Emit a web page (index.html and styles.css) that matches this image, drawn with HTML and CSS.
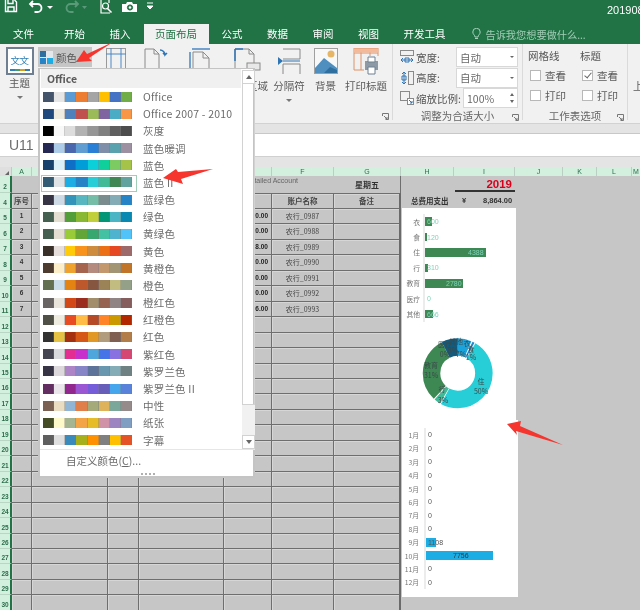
FILE: index.html
```html
<!DOCTYPE html>
<html lang="zh">
<head>
<meta charset="utf-8">
<title>Excel</title>
<link rel="stylesheet" href="styles.css">
</head>
<body>
<div class="app">
  <div class="titlebar">
    <svg class="qat" width="160" height="24" viewBox="0 0 160 24" fill="none" stroke="#fff">
      <path d="M5.5 0v11.5h11V2l-2-2M8 0v3.5h5V0M8 11v-4h6v4" stroke-width="1.4"/>
      <path d="M33 1l-3 3 3 3M30.5 4h7a4 4 0 0 1 0 8h-3" stroke-width="1.8"/>
      <path d="M47 6h6l-3 3z" fill="#fff" stroke="none"/>
      <path d="M75 1l3 3-3 3M77.5 4h-7a4 4 0 0 0 0 8h3" stroke="#5a9a78" stroke-width="1.8"/>
      <path d="M82 6h5l-2.500 3z" fill="#5a9a78" stroke="none"/>
      <path d="M101 0v13h9M109 0v3" stroke-width="1.2"/>
      <circle cx="105.500" cy="6" r="3" stroke-width="1.200"/>
      <path d="M107.500 8.500l4 4" stroke-width="1.600"/>
      <path d="M122 4h4l1-2h5l1 2h4v8h-15z" fill="#fff" stroke="none"/>
      <circle cx="130" cy="7.500" r="2.600" fill="#217346" stroke="#217346"/>
      <circle cx="130" cy="7.500" r="1.300" fill="#fff" stroke="none"/>
      <path d="M147 3h6M147 6h6l-3 3z" fill="#fff" stroke-width="1"/>
    </svg>
    <span class="filename">201908</span>
  </div>
  <div class="tabs">
    <span class="tab first">文件</span>
    <span class="tab second">开始</span>
    <span class="tab">插入</span>
    <span class="tab active">页面布局</span>
    <span class="tab after">公式</span>
    <span class="tab">数据</span>
    <span class="tab">审阅</span>
    <span class="tab">视图</span>
    <span class="tab">开发工具</span>
    <svg class="bulb" width="9" height="12" viewBox="0 0 9 12" fill="none" stroke="#a9d0ba"><path d="M3 9C3 7 .8 6.500.8 4a3.700 3.700 0 0 1 7.400 0C8.200 6.500 6 7 6 9zM3 10.500h3"/></svg>
    <span class="tell">告诉我您想要做什么...</span>
  </div>
  <div class="ribbon">
    <div class="group g-theme">
      <div class="theme-col">
        <div class="theme-icon"><span class="wen">文文</span><i class="dots"></i></div>
        <span class="blabel">主题</span>
        <i class="caret"></i>
      </div>
      <div class="color-btn"><i class="color-ico"></i><span>颜色</span></div>
    </div>
    <div class="group g-page">
      <div class="big w40">
        <svg width="22" height="28" viewBox="0 0 22 28" fill="none" stroke="#9a9a9a"><rect x="1.500" y="1.500" width="19" height="25"/><path d="M1 7h20M6 1v26M16 1v26" stroke="#4a86c5"/></svg>
        <span class="blabel">页边距</span>
      </div>
      <div class="big w40">
        <svg width="26" height="28" viewBox="0 0 26 28" fill="none" stroke="#8a8a8a"><path d="M2 2h9l5 5v20H2z"/><path d="M11 2v5h5"/><path d="M17 3a5 5 0 0 1 5 5l2-2m-2 2-2-2" stroke="#2f75b5" stroke-width="1.500"/></svg>
        <span class="blabel">纸张方向</span>
      </div>
      <div class="big w50">
        <svg width="24" height="28" viewBox="0 0 24 28" fill="none" stroke="#8a8a8a"><path d="M4 5h10l6 6v16H4z"/><path d="M14 5v6h6"/><path d="M3 2h18M1 5V27" stroke="#4a86c5" stroke-width="1.500"/></svg>
        <span class="blabel">纸张大小</span>
      </div>
      <div class="big w42">
        <svg width="30" height="28" viewBox="0 0 30 28" fill="none" stroke="#8a8a8a"><path d="M3 2h14l5 5v18H3z"/><path d="M17 2v5h5" /><path d="M3 2h8M3 2v12" stroke="#2f75b5" stroke-width="1.500"/><rect x="15" y="16" width="13" height="7" fill="#e8e8e8"/></svg>
        <span class="blabel">打印区域</span>
      </div>
      <div class="big w42">
        <svg width="24" height="28" viewBox="0 0 24 28" fill="none" stroke="#8a8a8a"><path d="M6 2h17v10H6M6 27V17h17v10"/><path d="M6 14h17" stroke="#2f75b5"/><path d="M1 10l5 4-5 4z" fill="#2f75b5" stroke="none"/></svg>
        <span class="blabel">分隔符</span>
        <i class="caret"></i>
      </div>
      <div class="big w31">
        <svg width="24" height="26" viewBox="0 0 24 26" fill="none"><rect x=".5" y=".5" width="23" height="25" stroke="#a0a0a0" fill="#f8f8f8"/><circle cx="17" cy="6" r="3.500" fill="#e6b565"/><path d="M1 20l9-10 13 10v5H1z" fill="#4f8fc0"/><path d="M10 25l6-6 7 3v3z" fill="#2f6f9f"/></svg>
        <span class="blabel">背景</span>
      </div>
      <div class="big w50">
        <svg width="28" height="28" viewBox="0 0 28 28" fill="none"><path d="M2 1.500h24M2 6h24M2 1v22h10M9 1v22M18 1v8M26 1v8" stroke="#e0926a"/><rect x="2" y="1.500" width="24" height="4" fill="#f2b99a"/><path d="M13 14h13v9H13z" fill="#8d9aa5"/><path d="M16 10h7v5h-7zM16 20h7v7h-7z" fill="#fff" stroke="#6f8090"/></svg>
        <span class="blabel">打印标题</span>
      </div>
      <div class="launch-row">
        <svg class="launch" width="7" height="7" viewBox="0 0 7 7" fill="none" stroke="#777"><path d="M.5 3V.5H6.500V6.500H4M2 3l3 3M5 4v2H3"/></svg>
      </div>
    </div>
    <div class="group g-size">
      <div class="srow">
        <svg width="14" height="14" viewBox="0 0 14 14" fill="none" stroke="#8a8a8a"><rect x=".5" y=".5" width="13" height="5"/><path d="M1 10h12M1 10l2-2m-2 2 2 2M13 10l-2-2m2 2-2 2M5 8h4v4H5z" stroke="#2f75b5"/></svg>
        <span class="slabel">宽度:</span>
        <div class="combo w62">自动<i class="caret small"></i></div>
      </div>
      <div class="srow">
        <svg width="14" height="14" viewBox="0 0 14 14" fill="none" stroke="#8a8a8a"><rect x="8.500" y=".5" width="5" height="13"/><path d="M4 1v12M4 1 2 3m2-2 2 2M4 13l-2-2m2 2 2-2M2 5h4v4H2z" stroke="#2f75b5"/></svg>
        <span class="slabel">高度:</span>
        <div class="combo w62">自动<i class="caret small"></i></div>
      </div>
      <div class="srow">
        <svg width="14" height="14" viewBox="0 0 14 14" fill="none" stroke="#8a8a8a"><rect x=".5" y=".5" width="9" height="9"/><rect x="7.500" y="7.500" width="6" height="6" fill="#fff"/><path d="M9 9l3 3m0-2v2h-2" stroke="#2f75b5"/></svg>
        <span class="slabel">缩放比例:</span>
        <div class="combo w55">100%<span class="spin"><i class="up"></i><i class="down"></i></span></div>
      </div>
      <div class="gtitle">调整为合适大小
        <svg class="launch" width="7" height="7" viewBox="0 0 7 7" fill="none" stroke="#777"><path d="M.5 3V.5H6.500V6.500H4M2 3l3 3M5 4v2H3"/></svg>
      </div>
    </div>
    <div class="group g-opts">
      <div class="opt-cols">
        <div class="ocol one">
          <span class="ohead">网格线</span>
          <label class="check"><i class="box"></i>查看</label>
          <label class="check"><i class="box"></i>打印</label>
        </div>
        <div class="ocol">
          <span class="ohead">标题</span>
          <label class="check"><i class="box on"></i>查看</label>
          <label class="check"><i class="box"></i>打印</label>
        </div>
      </div>
      <div class="gtitle">工作表选项
        <svg class="launch" width="7" height="7" viewBox="0 0 7 7" fill="none" stroke="#777"><path d="M.5 3V.5H6.500V6.500H4M2 3l3 3M5 4v2H3"/></svg>
      </div>
    </div>
    <div class="group g-rest"><span class="blabel">上</span></div>
  </div>
  <div class="namegap"></div>
  <div class="namebar"><div class="namebox">U11</div></div>
  <div class="namegap lower"></div>
  <div class="colhead">
    <span class="corner"></span>
    <span class="ca">A</span><span class="cb">B</span><span class="cc">C</span><span class="cd">D</span><span class="ce">E</span><span class="cf">F</span><span class="cg">G</span>
    <span class="ch">H</span><span class="ci">I</span><span class="cj">J</span><span class="ck">K</span><span class="cl">L</span><span class="cm">M</span>
  </div>
  <div class="sheet">
    <div class="left">
      <div class="row top"><b class="rl">2</b><span class="acct">Detailed Account</span><span class="day">星期五</span></div>
      <div class="row head"><b class="rl">4</b><i class="ca">序号</i><i class="cb">日期</i><i class="cc">类别</i><i class="cd">摘要</i><i class="ce">金额</i><i class="cf">账户名称</i><i class="cg">备注</i></div>
      <div class="row data"><b class="rl">5</b><i class="ca">1</i><i class="cb"></i><i class="cc"></i><i class="cd"></i><i class="ce num">600.00</i><i class="cf">农行_0987</i><i class="cg"></i></div>
      <div class="row data"><b class="rl">6</b><i class="ca">2</i><i class="cb"></i><i class="cc"></i><i class="cd"></i><i class="ce num">120.00</i><i class="cf">农行_0988</i><i class="cg"></i></div>
      <div class="row data"><b class="rl">7</b><i class="ca">3</i><i class="cb"></i><i class="cc"></i><i class="cd"></i><i class="ce num">4,388.00</i><i class="cf">农行_0989</i><i class="cg"></i></div>
      <div class="row data"><b class="rl">8</b><i class="ca">4</i><i class="cb"></i><i class="cc"></i><i class="cd"></i><i class="ce num">310.00</i><i class="cf">农行_0990</i><i class="cg"></i></div>
      <div class="row data"><b class="rl">9</b><i class="ca">5</i><i class="cb"></i><i class="cc"></i><i class="cd"></i><i class="ce num">2,780.00</i><i class="cf">农行_0991</i><i class="cg"></i></div>
      <div class="row data"><b class="rl">10</b><i class="ca">6</i><i class="cb"></i><i class="cc"></i><i class="cd"></i><i class="ce num">0.00</i><i class="cf">农行_0992</i><i class="cg"></i></div>
      <div class="row data"><b class="rl">11</b><i class="ca">7</i><i class="cb"></i><i class="cc"></i><i class="cd"></i><i class="ce num">666.00</i><i class="cf">农行_0993</i><i class="cg"></i></div>
      <div class="row"><b class="rl">12</b><i class="ca"></i><i class="cb"></i><i class="cc"></i><i class="cd"></i><i class="ce"></i><i class="cf"></i><i class="cg"></i></div>
      <div class="row"><b class="rl">13</b><i class="ca"></i><i class="cb"></i><i class="cc"></i><i class="cd"></i><i class="ce"></i><i class="cf"></i><i class="cg"></i></div>
      <div class="row"><b class="rl">14</b><i class="ca"></i><i class="cb"></i><i class="cc"></i><i class="cd"></i><i class="ce"></i><i class="cf"></i><i class="cg"></i></div>
      <div class="row"><b class="rl">15</b><i class="ca"></i><i class="cb"></i><i class="cc"></i><i class="cd"></i><i class="ce"></i><i class="cf"></i><i class="cg"></i></div>
      <div class="row"><b class="rl">16</b><i class="ca"></i><i class="cb"></i><i class="cc"></i><i class="cd"></i><i class="ce"></i><i class="cf"></i><i class="cg"></i></div>
      <div class="row"><b class="rl">17</b><i class="ca"></i><i class="cb"></i><i class="cc"></i><i class="cd"></i><i class="ce"></i><i class="cf"></i><i class="cg"></i></div>
      <div class="row"><b class="rl">18</b><i class="ca"></i><i class="cb"></i><i class="cc"></i><i class="cd"></i><i class="ce"></i><i class="cf"></i><i class="cg"></i></div>
      <div class="row"><b class="rl">19</b><i class="ca"></i><i class="cb"></i><i class="cc"></i><i class="cd"></i><i class="ce"></i><i class="cf"></i><i class="cg"></i></div>
      <div class="row"><b class="rl">20</b><i class="ca"></i><i class="cb"></i><i class="cc"></i><i class="cd"></i><i class="ce"></i><i class="cf"></i><i class="cg"></i></div>
      <div class="row"><b class="rl">21</b><i class="ca"></i><i class="cb"></i><i class="cc"></i><i class="cd"></i><i class="ce"></i><i class="cf"></i><i class="cg"></i></div>
      <div class="row"><b class="rl">22</b><i class="ca"></i><i class="cb"></i><i class="cc"></i><i class="cd"></i><i class="ce"></i><i class="cf"></i><i class="cg"></i></div>
      <div class="row"><b class="rl">23</b><i class="ca"></i><i class="cb"></i><i class="cc"></i><i class="cd"></i><i class="ce"></i><i class="cf"></i><i class="cg"></i></div>
      <div class="row"><b class="rl">24</b><i class="ca"></i><i class="cb"></i><i class="cc"></i><i class="cd"></i><i class="ce"></i><i class="cf"></i><i class="cg"></i></div>
      <div class="row"><b class="rl">25</b><i class="ca"></i><i class="cb"></i><i class="cc"></i><i class="cd"></i><i class="ce"></i><i class="cf"></i><i class="cg"></i></div>
      <div class="row"><b class="rl">26</b><i class="ca"></i><i class="cb"></i><i class="cc"></i><i class="cd"></i><i class="ce"></i><i class="cf"></i><i class="cg"></i></div>
      <div class="row"><b class="rl">27</b><i class="ca"></i><i class="cb"></i><i class="cc"></i><i class="cd"></i><i class="ce"></i><i class="cf"></i><i class="cg"></i></div>
      <div class="row"><b class="rl">28</b><i class="ca"></i><i class="cb"></i><i class="cc"></i><i class="cd"></i><i class="ce"></i><i class="cf"></i><i class="cg"></i></div>
      <div class="row"><b class="rl">29</b><i class="ca"></i><i class="cb"></i><i class="cc"></i><i class="cd"></i><i class="ce"></i><i class="cf"></i><i class="cg"></i></div>
      <div class="row"><b class="rl">30</b><i class="ca"></i><i class="cb"></i><i class="cc"></i><i class="cd"></i><i class="ce"></i><i class="cf"></i><i class="cg"></i></div>
    </div>
    <div class="side">
      <div class="year">2019</div>
      <div class="total"><span class="tl">总费用支出</span><span class="ty">¥</span><span class="ta">8,864.00</span></div>
      <div class="panel bars">
        <div class="brow"><span class="lab">衣</span><div class="track"><i class="bar" style="width:7px"></i><span class="val">600</span></div></div>
        <div class="brow"><span class="lab">食</span><div class="track"><i class="bar" style="width:1.500px"></i><span class="val">120</span></div></div>
        <div class="brow"><span class="lab">住</span><div class="track"><i class="bar" style="width:61px"></i><span class="val v-a">4388</span></div></div>
        <div class="brow"><span class="lab">行</span><div class="track"><i class="bar" style="width:3px"></i><span class="val">310</span></div></div>
        <div class="brow"><span class="lab">教育</span><div class="track"><i class="bar" style="width:38px"></i><span class="val v-b">2780</span></div></div>
        <div class="brow"><span class="lab">医疗</span><div class="track"><span class="val">0</span></div></div>
        <div class="brow"><span class="lab">其他</span><div class="track"><i class="bar" style="width:8px"></i><span class="val">666</span></div></div>
      </div>
      <div class="panel donut">
        <svg width="113" height="90" viewBox="402 330 113 90">
          <g fill="none" stroke-width="17.500" transform="rotate(-90 457.700 373.300)">
            <circle cx="457.700" cy="373.300" r="26.200" pathLength="100" stroke="#1da3dc" stroke-dasharray="6.400 93.600"/>
            <circle cx="457.700" cy="373.300" r="26.200" pathLength="100" stroke="#2683c6" stroke-dasharray="1 99" stroke-dashoffset="-7"/>
            <circle cx="457.700" cy="373.300" r="26.200" pathLength="100" stroke="#27ced7" stroke-dasharray="49.500 50.500" stroke-dashoffset="-8.500"/>
            <circle cx="457.700" cy="373.300" r="26.200" pathLength="100" stroke="#42ba97" stroke-dasharray="3 97" stroke-dashoffset="-58.500"/>
            <circle cx="457.700" cy="373.300" r="26.200" pathLength="100" stroke="#3e8853" stroke-dasharray="30.500 69.500" stroke-dashoffset="-62"/>
            <circle cx="457.700" cy="373.300" r="26.200" pathLength="100" stroke="#145a7c" stroke-dasharray="7.500 92.500" stroke-dashoffset="-92.500"/>
          </g>
          <g class="dl">
            <text x="467" y="346" text-anchor="middle">衣</text><text x="461" y="357" text-anchor="middle">7%</text>
            <text x="471" y="352" text-anchor="middle">食</text><text x="471" y="360" text-anchor="middle">1%</text>
            <text x="481" y="384" text-anchor="middle">住</text><text x="481" y="394" text-anchor="middle">50%</text>
            <text x="442" y="392" text-anchor="middle">行</text><text x="443" y="403" text-anchor="middle">3%</text>
            <text x="431" y="368" text-anchor="middle">教育</text><text x="431" y="378" text-anchor="middle">31%</text>
            <text x="445" y="347" text-anchor="middle">医疗</text><text x="445" y="357" text-anchor="middle">0%</text>
            <text x="456" y="344" text-anchor="middle">其他</text><text x="453" y="353" text-anchor="middle">8%</text>
          </g>
        </svg>
      </div>
      <div class="panel months">
        <div class="mrow"><span class="lab">1月</span><div class="track"><span class="val">0</span></div></div>
        <div class="mrow"><span class="lab">2月</span><div class="track"><span class="val">0</span></div></div>
        <div class="mrow"><span class="lab">3月</span><div class="track"><span class="val">0</span></div></div>
        <div class="mrow"><span class="lab">4月</span><div class="track"><span class="val">0</span></div></div>
        <div class="mrow"><span class="lab">5月</span><div class="track"><span class="val">0</span></div></div>
        <div class="mrow"><span class="lab">6月</span><div class="track"><span class="val">0</span></div></div>
        <div class="mrow"><span class="lab">7月</span><div class="track"><span class="val">0</span></div></div>
        <div class="mrow"><span class="lab">8月</span><div class="track"><span class="val">0</span></div></div>
        <div class="mrow"><span class="lab">9月</span><div class="track"><i class="bar" style="width:10px"></i><span class="val">1108</span></div></div>
        <div class="mrow"><span class="lab">10月</span><div class="track"><i class="bar" style="width:67px"></i><span class="val v-c">7756</span></div></div>
        <div class="mrow"><span class="lab">11月</span><div class="track"><span class="val">0</span></div></div>
        <div class="mrow"><span class="lab">12月</span><div class="track"><span class="val">0</span></div></div>
      </div>
    </div>
  </div>

  <div class="popup">
    <div class="plist">
      <div class="phead">Office</div>
      <div class="prow"><span class="sw"><i class="c-44546a"></i><i class="c-e7e6e6"></i><i class="c-5b9bd5"></i><i class="c-ed7d31"></i><i class="c-a5a5a5"></i><i class="c-ffc000"></i><i class="c-4472c4"></i><i class="c-70ad47"></i></span><span>Office</span></div>
      <div class="prow"><span class="sw"><i class="c-1f497d"></i><i class="c-eeece1"></i><i class="c-4f81bd"></i><i class="c-c0504d"></i><i class="c-9bbb59"></i><i class="c-8064a2"></i><i class="c-4bacc6"></i><i class="c-f79646"></i></span><span>Office 2007 - 2010</span></div>
      <div class="prow"><span class="sw"><i class="c-000000"></i><i class="c-f8f8f8"></i><i class="c-dddddd"></i><i class="c-b2b2b2"></i><i class="c-969696"></i><i class="c-808080"></i><i class="c-5f5f5f"></i><i class="c-4d4d4d"></i></span><span>灰度</span></div>
      <div class="prow"><span class="sw"><i class="c-242852"></i><i class="c-acccea"></i><i class="c-4a66ac"></i><i class="c-629dd1"></i><i class="c-297fd5"></i><i class="c-7f8fa9"></i><i class="c-5aa2ae"></i><i class="c-9d90a0"></i></span><span>蓝色暖调</span></div>
      <div class="prow"><span class="sw"><i class="c-17406d"></i><i class="c-dbeff9"></i><i class="c-0f6fc6"></i><i class="c-009dd9"></i><i class="c-0bd0d9"></i><i class="c-10cf9b"></i><i class="c-7cca62"></i><i class="c-a5c249"></i></span><span>蓝色</span></div>
      <div class="prow sel"><span class="sw"><i class="c-335b74"></i><i class="c-dfe3e5"></i><i class="c-1cade4"></i><i class="c-2683c6"></i><i class="c-27ced7"></i><i class="c-42ba97"></i><i class="c-3e8853"></i><i class="c-62a39f"></i></span><span>蓝色 II</span></div>
      <div class="prow"><span class="sw"><i class="c-373545"></i><i class="c-cedbe6"></i><i class="c-3494ba"></i><i class="c-58b6c0"></i><i class="c-75bda7"></i><i class="c-7a8c8e"></i><i class="c-84acb6"></i><i class="c-2683c6"></i></span><span>蓝绿色</span></div>
      <div class="prow"><span class="sw"><i class="c-455f51"></i><i class="c-e3ded1"></i><i class="c-549e39"></i><i class="c-8ab833"></i><i class="c-c0cf3a"></i><i class="c-029676"></i><i class="c-4ab5c4"></i><i class="c-0989b1"></i></span><span>绿色</span></div>
      <div class="prow"><span class="sw"><i class="c-455f51"></i><i class="c-e3ded1"></i><i class="c-99cb38"></i><i class="c-63a537"></i><i class="c-37a76f"></i><i class="c-44c1a3"></i><i class="c-4eb3cf"></i><i class="c-51c3f9"></i></span><span>黄绿色</span></div>
      <div class="prow"><span class="sw"><i class="c-39302a"></i><i class="c-e5dedb"></i><i class="c-ffca08"></i><i class="c-f8931d"></i><i class="c-ce8d3e"></i><i class="c-ec7016"></i><i class="c-e64823"></i><i class="c-9c6a6a"></i></span><span>黄色</span></div>
      <div class="prow"><span class="sw"><i class="c-4e3b30"></i><i class="c-fbeec9"></i><i class="c-f0a22e"></i><i class="c-a5644e"></i><i class="c-b58b80"></i><i class="c-c3986d"></i><i class="c-a19574"></i><i class="c-c17529"></i></span><span>黄橙色</span></div>
      <div class="prow"><span class="sw"><i class="c-637052"></i><i class="c-ccddea"></i><i class="c-e48312"></i><i class="c-bd582c"></i><i class="c-865640"></i><i class="c-9b8357"></i><i class="c-c2bc80"></i><i class="c-94a088"></i></span><span>橙色</span></div>
      <div class="prow"><span class="sw"><i class="c-696464"></i><i class="c-e9e5dc"></i><i class="c-d34817"></i><i class="c-9b2d1f"></i><i class="c-a28e6a"></i><i class="c-956251"></i><i class="c-918485"></i><i class="c-855d5d"></i></span><span>橙红色</span></div>
      <div class="prow"><span class="sw"><i class="c-505046"></i><i class="c-eeece0"></i><i class="c-e84c22"></i><i class="c-ffbd47"></i><i class="c-b64926"></i><i class="c-ff8427"></i><i class="c-cc9900"></i><i class="c-b22600"></i></span><span>红橙色</span></div>
      <div class="prow"><span class="sw"><i class="c-323232"></i><i class="c-e5c243"></i><i class="c-a5300f"></i><i class="c-d55816"></i><i class="c-e19825"></i><i class="c-b19c7d"></i><i class="c-7f5f52"></i><i class="c-b27d49"></i></span><span>红色</span></div>
      <div class="prow"><span class="sw"><i class="c-454551"></i><i class="c-d8d9dc"></i><i class="c-e32d91"></i><i class="c-c830cc"></i><i class="c-4ea6dc"></i><i class="c-4775e7"></i><i class="c-8971e1"></i><i class="c-d54773"></i></span><span>紫红色</span></div>
      <div class="prow"><span class="sw"><i class="c-373545"></i><i class="c-dcd8dc"></i><i class="c-ad84c6"></i><i class="c-8784c7"></i><i class="c-5d739a"></i><i class="c-6997af"></i><i class="c-84acb6"></i><i class="c-6f8183"></i></span><span>紫罗兰色</span></div>
      <div class="prow"><span class="sw"><i class="c-632e62"></i><i class="c-eae5eb"></i><i class="c-92278f"></i><i class="c-9b57d3"></i><i class="c-755dd9"></i><i class="c-665eb8"></i><i class="c-45a5ed"></i><i class="c-5982db"></i></span><span>紫罗兰色 II</span></div>
      <div class="prow"><span class="sw"><i class="c-7a5f53"></i><i class="c-e9dcc2"></i><i class="c-90b5d5"></i><i class="c-e07f4a"></i><i class="c-a4aa7a"></i><i class="c-deb25a"></i><i class="c-7aa79a"></i><i class="c-958b8a"></i></span><span>中性</span></div>
      <div class="prow"><span class="sw"><i class="c-444d26"></i><i class="c-fefac9"></i><i class="c-a5b592"></i><i class="c-f3a447"></i><i class="c-e7bc29"></i><i class="c-d092a7"></i><i class="c-9c85c0"></i><i class="c-809ec2"></i></span><span>纸张</span></div>
      <div class="prow"><span class="sw"><i class="c-5f5f5f"></i><i class="c-dfdfdf"></i><i class="c-3a8bbb"></i><i class="c-a5b01c"></i><i class="c-ff9000"></i><i class="c-808080"></i><i class="c-ffc000"></i><i class="c-e55225"></i></span><span>字幕</span></div>
    </div>
    <div class="pscroll">
      <div class="sbtn"><i class="tri up"></i></div>
      <div class="thumb"></div>
      <div class="strack"></div>
      <div class="sbtn"><i class="tri down"></i></div>
    </div>
    <div class="pfoot">
      <div class="custom">自定义颜色(<u>C</u>)...</div>
      <div class="grip"><i></i><i></i><i></i><i></i></div>
    </div>
  </div>

  <svg class="arrows" width="640" height="610" viewBox="0 0 640 610">
    <polygon points="76,62 84,50 87,54 113,42 89,58 92,61"/>
    <polygon points="163,178 176,169 178,172 213,169 181,179 183,184"/>
    <polygon points="507,424 521,421 520,426 563,445 516,431 517,435"/>
  </svg>
</div>
</body>
</html>
```

FILE: styles.css
```css
* { box-sizing: border-box; }
html, body { margin: 0; padding: 0; }
body { width: 640px; height: 610px; overflow: hidden; background: #c6c6c6; }
i { font-style: normal; display: block; }
.app {
  position: relative; width: 640px; height: 610px; overflow: hidden;
  font-family: "Noto Sans CJK SC", "Liberation Sans", sans-serif;
  color: #5a5a5a; font-size: 10.5px;
  filter: blur(0.4px);
}

/* title + tabs */
.titlebar { height: 24px; background: #217346; display: flex; justify-content: space-between; }
.qat { display: block; }
.filename { color: #fff; font: 11px/20px "Liberation Sans", sans-serif; width: 33px; overflow: hidden; white-space: nowrap; }
.tabs { height: 20px; background: #217346; display: flex; align-items: center; color: #fff; }
.tab { margin-left: 24.5px; line-height: 20px; }
.tab.first { margin-left: 13px; }
.tab.second { margin-left: 30px; }
.tab.active { margin-left: 13px; padding: 0 11.5px; background: #f1f1f1; color: #217346; }
.tab.after { margin-left: 13px; }
.bulb { margin-left: 26px; }
.tell { margin-left: 5px; color: #a3cdb6; font-size: 10.2px; }

/* ribbon */
.ribbon { height: 80px; background: #f1f1f1; display: flex; border-bottom: 1px solid #d2d2d2; }
.group { position: relative; display: flex; flex-wrap: wrap; align-content: flex-start; padding-top: 3px; height: 76px; border-right: 1px solid #dadada; }
.g-theme { width: 96px; border: 0; }
.theme-col { width: 38px; display: flex; flex-direction: column; align-items: center; padding-left: 1px; }
.theme-icon { width: 28px; height: 28px; border: 2px solid #6f7f92; background: #fff; display: flex; flex-direction: column; align-items: center; }
.wen { color: #2f7fb5; font-size: 9.5px; line-height: 18px; margin-top: 2px; letter-spacing: -.5px; }
.dots { width: 20px; height: 2px; background: linear-gradient(90deg, #2f7fb5 0 25%, #3e9d6b 25% 50%, #d0a020 50% 75%, #2f7fb5 75%); }
.blabel { white-space: nowrap; line-height: 14px; display: block; }
.theme-col .blabel { line-height: 14px; margin-top: 1px; }
.caret { width: 0; height: 0; border: 3px solid transparent; border-top: 3px solid #777; border-bottom: 0; margin-top: 6px; }
.color-btn { width: 54px; height: 20px; background: #c6c6c6; display: flex; align-items: center; gap: 3px; padding-left: 2px; color: #555; }
.color-ico { width: 13px; height: 13px; background: linear-gradient(#2f6f9f 0 0) 0 0/6px 6px no-repeat, linear-gradient(#1cade4 0 0) 7px 7px/6px 6px no-repeat, linear-gradient(#2683c6 0 0) 0 7px/6px 6px no-repeat, #e4e8ea; }
.g-page { width: 297px; flex-wrap: nowrap; }
.big { display: flex; flex-direction: column; align-items: center; flex: none; height: 60px; }
.big svg { height: 28px; flex: none; margin-bottom: 4px; }
.w31 { width: 31px; } .w40 { width: 40px; } .w42 { width: 42px; } .w50 { width: 50px; }
.launch-row { position: absolute; right: 3px; bottom: 0; }
.launch { display: block; }
.g-size { width: 130px; padding-left: 7px; padding-right: 4px; flex-direction: column; flex-wrap: nowrap; }
.srow { display: flex; align-items: center; height: 20px; width: 100%; margin-bottom: .5px; }
.slabel { margin-left: 2px; white-space: nowrap; color: #555; }
.combo { margin-left: auto; height: 20px; background: #fff; border: 1px solid #d8d8d8; display: flex; align-items: center; justify-content: space-between; padding: 0 3px 0 3px; color: #6a6a6a; }
.w62 { width: 62px; } .w55 { width: 55px; }
.caret.small { border-width: 2.5px; border-top-color: #666; margin-top: 0; border-bottom: 0; }
.spin { display: flex; flex-direction: column; gap: 4px; }
.spin .up { border: 2.5px solid transparent; border-bottom: 3px solid #666; border-top: 0; }
.spin .down { border: 2.5px solid transparent; border-top: 3px solid #666; border-bottom: 0; }
.gtitle { position: absolute; bottom: -3px; left: 0; right: 0; display: flex; justify-content: center; line-height: 14px; white-space: nowrap; color: #666; }
.gtitle .launch { position: absolute; right: 3px; top: 5px; }
.g-opts { width: 105px; padding-left: 5px; }
.opt-cols { display: flex; }
.ocol { display: flex; flex-direction: column; }
.ocol.one { width: 52px; }
.ohead { line-height: 18px; color: #555; }
.check { display: flex; align-items: center; height: 20px; padding-left: 2px; gap: 4px; }
.box { width: 11px; height: 11px; background: #fff; border: 1px solid #b8b8b8; position: relative; }
.box.on::after { content: ""; position: absolute; left: 3px; top: 0; width: 3px; height: 6px; border: solid #666; border-width: 0 1px 1px 0; transform: rotate(40deg); }
.g-rest { width: 12px; border: 0; padding: 35px 0 0 5px; }

/* name bar */
.namegap { height: 10px; background: #e4e4e4; border-bottom: 1px solid #c8c8c8; }
.namegap.lower { border: 0; }
.namebar { height: 23px; background: #fff; border-bottom: 1px solid #d0d0d0; padding-left: 3px; }
.namebox { font: 14px/22px "Liberation Sans", sans-serif; color: #6d6d6d; padding-left: 6px; }

/* column header */
.colhead { height: 9px; display: flex; background: #d3f0df; color: #2b6d4b; font: 7px/9px "Liberation Sans", sans-serif; text-align: center; }
.colhead span { border-right: 1px solid #b9cfc2; flex: none; }
.corner { width: 12px; background: #dfdfdf; position: relative; }
.corner::after { content: ""; position: absolute; right: 2px; bottom: 1px; border: solid transparent; border-width: 0 0 4px 4px; border-bottom-color: #666; }
.ca { width: 20px; } .cb { width: 76px; } .cc { width: 31px; } .cd { width: 85px; } .ce { width: 48px; } .cf { width: 62px; } .cg { width: 67px; }
.ch { width: 53px; } .ci { width: 61px; } .cj { width: 48px; } .ck { width: 34px; } .cl { width: 35px; } .cm { width: 9px; }

/* sheet */
.sheet { display: flex; height: 434px; overflow: hidden; background: #c6c6c6; }
.left { width: 401px; flex: none; }
.row { display: flex; height: 15.46px; }
.rl { width: 12px; flex: none; background: #d3f0df; border-right: 2px solid #217346; border-bottom: 1px solid #b9d6c5; color: #2b6d4b; font: bold 6.5px/9px "Liberation Sans", sans-serif; display: flex; align-items: flex-end; justify-content: center; padding-bottom: 1px; overflow: hidden; }
.row > i { flex: none; border-right: 1px solid #6e6e6e; border-bottom: 1px solid #6e6e6e; box-shadow: inset 1px 1px 0 #d6d6d6; font-size: 7px; line-height: 14px; text-align: center; color: #333; overflow: hidden; white-space: nowrap; }
.row.top { height: 17px; }
.acct { width: 322px; text-align: right; padding-right: 36px; font: 7px/10px "Liberation Sans", sans-serif; color: #666; }
.day { width: 67px; text-align: center; font-size: 8px; font-weight: 700; line-height: 17px; color: #333; border-right: 1px solid #6e6e6e; }
.row.head { height: 16px; }
.row.head > i { border-top: 1px solid #6e6e6e; font-weight: 700; font-size: 7.500px; line-height: 14px; color: #444; }
.row.data .ca { font-weight: 700; color: #333; font-size: 6.500px; font-family: "Liberation Sans", sans-serif; }
.row.data .cf { color: #444; }
.row > i.num { text-align: right; padding-right: 3px; font: bold 6.500px/14px "Liberation Sans", sans-serif; color: #222; }
.row > i.cg { border-right: 2px solid #6a6a6a; }

.side { flex: 1; display: flex; flex-direction: column; align-items: flex-start; padding-left: 1px; }
.year { width: 113px; height: 17px; text-align: right; padding-right: 3px; font: bold 11.500px/16px "Liberation Sans", sans-serif; color: #d9001b; position: relative; }
.year::after { content: ""; position: absolute; left: 53px; right: 0; bottom: 1px; height: 2px; background: #333; }
.total { width: 113px; height: 15px; display: flex; align-items: center; font-size: 7.500px; font-weight: 700; color: #333; }
.tl { margin-left: 9px; width: 51px; }
.ty { width: 21px; font-family: "Liberation Sans", sans-serif; }
.ta { font: bold 7.500px "Liberation Sans", sans-serif; }
.panel { background: #fff; width: 113.500px; }
.bars { height: 122px; padding-top: 6px; }
.donut { height: 90px; }
.donut svg { display: block; }
.dl text { font-size: 7px; fill: #3a4a4a; }
.months { width: 116px; height: 177px; padding-top: 8.300px; }
.brow, .mrow { display: flex; align-items: center; }
.brow { height: 15.400px; }
.mrow { height: 13.400px; }
.lab { width: 21px; flex: none; text-align: right; padding-right: 3px; font-size: 6.800px; color: #777; white-space: nowrap; }
.mrow .lab { width: 22px; padding-right: 5px; }
.track { flex: 1; display: grid; align-items: center; height: 100%; border-left: 2px solid #ececec; }
.track > * { grid-area: 1 / 1; justify-self: start; }
.bar { height: 8.500px; background: #3e8853; }
.mrow .bar { height: 9px; background: #1cade4; }
.val { margin-left: 2px; font: 7px "Liberation Sans", sans-serif; color: #7fd3bb; }
.mrow .val { color: #555; }
.val.v-a { margin-left: 43px; }
.val.v-b { margin-left: 21px; }
.val.v-c { margin-left: 27px; color: #333; }

/* popup */
.popup { position: absolute; left: 38px; top: 68px; width: 217px; height: 410px; background: #fff; border: 1px solid #c4c4c4; border-width: 1px 2px 2px 2px; display: grid; grid-template-columns: 201px 13px; grid-template-rows: 380px 1fr; column-gap: 1px; }
.phead { height: 19px; margin-left: 1px; background: #f0f0f0; font-weight: 700; color: #5a5a5a; line-height: 19px; padding-left: 6px; }
.plist { overflow: hidden; }
.prow { height: 17.180px; display: flex; align-items: center; padding-left: 3px; gap: 11px; color: #6c6c6c; white-space: nowrap; letter-spacing: .2px; position: relative; }
.prow.sel::before { content: ""; position: absolute; left: 1px; top: 1px; width: 94px; height: 15px; border: 1px solid #9fcfb6; }
.sw { display: flex; width: 89px; height: 10px; flex: none; position: relative; }
.sw i { flex: 1; border-right: 1px solid rgba(120,120,120,.35); }
.pscroll { display: flex; flex-direction: column; margin-top: 1px; }
.sbtn { height: 14px; background: #fff; border: 1px solid #d2d2d2; display: flex; align-items: center; justify-content: center; flex: none; }
.sbtn + .thumb { height: 321px; border: 1px solid #d2d2d2; border-top: 0; flex: none; }
.strack { flex: 1; background: #f1f1f1; }
.tri { border: 3px solid transparent; }
.tri.up { border-bottom: 4px solid #666; border-top: 0; }
.tri.down { border-top: 4px solid #666; border-bottom: 0; }
.pfoot { grid-column: 1 / 3; border-top: 1px solid #e6e6e6; }
.custom { padding-left: 26px; line-height: 22px; color: #6a6a6a; }
.grip { display: flex; justify-content: center; gap: 2px; margin-top: 1px; }
.grip i { width: 2px; height: 2px; background: #b0b0b0; }

.arrows { position: absolute; left: 0; top: 0; pointer-events: none; }
.arrows polygon { fill: #f5352e; }

/* theme swatches */
.c-44546a{background:#44546a}.c-e7e6e6{background:#e7e6e6}.c-5b9bd5{background:#5b9bd5}.c-ed7d31{background:#ed7d31}.c-a5a5a5{background:#a5a5a5}.c-ffc000{background:#ffc000}.c-4472c4{background:#4472c4}.c-70ad47{background:#70ad47}
.c-1f497d{background:#1f497d}.c-eeece1{background:#eeece1}.c-4f81bd{background:#4f81bd}.c-c0504d{background:#c0504d}.c-9bbb59{background:#9bbb59}.c-8064a2{background:#8064a2}.c-4bacc6{background:#4bacc6}.c-f79646{background:#f79646}
.c-000000{background:#000}.c-f8f8f8{background:#f8f8f8}.c-dddddd{background:#ddd}.c-b2b2b2{background:#b2b2b2}.c-969696{background:#969696}.c-808080{background:#808080}.c-5f5f5f{background:#5f5f5f}.c-4d4d4d{background:#4d4d4d}
.c-242852{background:#242852}.c-acccea{background:#acccea}.c-4a66ac{background:#4a66ac}.c-629dd1{background:#629dd1}.c-297fd5{background:#297fd5}.c-7f8fa9{background:#7f8fa9}.c-5aa2ae{background:#5aa2ae}.c-9d90a0{background:#9d90a0}
.c-17406d{background:#17406d}.c-dbeff9{background:#dbeff9}.c-0f6fc6{background:#0f6fc6}.c-009dd9{background:#009dd9}.c-0bd0d9{background:#0bd0d9}.c-10cf9b{background:#10cf9b}.c-7cca62{background:#7cca62}.c-a5c249{background:#a5c249}
.c-335b74{background:#335b74}.c-dfe3e5{background:#dfe3e5}.c-1cade4{background:#1cade4}.c-2683c6{background:#2683c6}.c-27ced7{background:#27ced7}.c-42ba97{background:#42ba97}.c-3e8853{background:#3e8853}.c-62a39f{background:#62a39f}
.c-373545{background:#373545}.c-cedbe6{background:#cedbe6}.c-3494ba{background:#3494ba}.c-58b6c0{background:#58b6c0}.c-75bda7{background:#75bda7}.c-7a8c8e{background:#7a8c8e}.c-84acb6{background:#84acb6}
.c-455f51{background:#455f51}.c-e3ded1{background:#e3ded1}.c-549e39{background:#549e39}.c-8ab833{background:#8ab833}.c-c0cf3a{background:#c0cf3a}.c-029676{background:#029676}.c-4ab5c4{background:#4ab5c4}.c-0989b1{background:#0989b1}
.c-99cb38{background:#99cb38}.c-63a537{background:#63a537}.c-37a76f{background:#37a76f}.c-44c1a3{background:#44c1a3}.c-4eb3cf{background:#4eb3cf}.c-51c3f9{background:#51c3f9}
.c-39302a{background:#39302a}.c-e5dedb{background:#e5dedb}.c-ffca08{background:#ffca08}.c-f8931d{background:#f8931d}.c-ce8d3e{background:#ce8d3e}.c-ec7016{background:#ec7016}.c-e64823{background:#e64823}.c-9c6a6a{background:#9c6a6a}
.c-4e3b30{background:#4e3b30}.c-fbeec9{background:#fbeec9}.c-f0a22e{background:#f0a22e}.c-a5644e{background:#a5644e}.c-b58b80{background:#b58b80}.c-c3986d{background:#c3986d}.c-a19574{background:#a19574}.c-c17529{background:#c17529}
.c-637052{background:#637052}.c-ccddea{background:#ccddea}.c-e48312{background:#e48312}.c-bd582c{background:#bd582c}.c-865640{background:#865640}.c-9b8357{background:#9b8357}.c-c2bc80{background:#c2bc80}.c-94a088{background:#94a088}
.c-696464{background:#696464}.c-e9e5dc{background:#e9e5dc}.c-d34817{background:#d34817}.c-9b2d1f{background:#9b2d1f}.c-a28e6a{background:#a28e6a}.c-956251{background:#956251}.c-918485{background:#918485}.c-855d5d{background:#855d5d}
.c-505046{background:#505046}.c-eeece0{background:#eeece0}.c-e84c22{background:#e84c22}.c-ffbd47{background:#ffbd47}.c-b64926{background:#b64926}.c-ff8427{background:#ff8427}.c-cc9900{background:#c90}.c-b22600{background:#b22600}
.c-323232{background:#323232}.c-e5c243{background:#e5c243}.c-a5300f{background:#a5300f}.c-d55816{background:#d55816}.c-e19825{background:#e19825}.c-b19c7d{background:#b19c7d}.c-7f5f52{background:#7f5f52}.c-b27d49{background:#b27d49}
.c-454551{background:#454551}.c-d8d9dc{background:#d8d9dc}.c-e32d91{background:#e32d91}.c-c830cc{background:#c830cc}.c-4ea6dc{background:#4ea6dc}.c-4775e7{background:#4775e7}.c-8971e1{background:#8971e1}.c-d54773{background:#d54773}
.c-dcd8dc{background:#dcd8dc}.c-ad84c6{background:#ad84c6}.c-8784c7{background:#8784c7}.c-5d739a{background:#5d739a}.c-6997af{background:#6997af}.c-6f8183{background:#6f8183}
.c-632e62{background:#632e62}.c-eae5eb{background:#eae5eb}.c-92278f{background:#92278f}.c-9b57d3{background:#9b57d3}.c-755dd9{background:#755dd9}.c-665eb8{background:#665eb8}.c-45a5ed{background:#45a5ed}.c-5982db{background:#5982db}
.c-7a5f53{background:#7a5f53}.c-e9dcc2{background:#e9dcc2}.c-90b5d5{background:#90b5d5}.c-e07f4a{background:#e07f4a}.c-a4aa7a{background:#a4aa7a}.c-deb25a{background:#deb25a}.c-7aa79a{background:#7aa79a}.c-958b8a{background:#958b8a}
.c-444d26{background:#444d26}.c-fefac9{background:#fefac9}.c-a5b592{background:#a5b592}.c-f3a447{background:#f3a447}.c-e7bc29{background:#e7bc29}.c-d092a7{background:#d092a7}.c-9c85c0{background:#9c85c0}.c-809ec2{background:#809ec2}
.c-dfdfdf{background:#dfdfdf}.c-3a8bbb{background:#3a8bbb}.c-a5b01c{background:#a5b01c}.c-ff9000{background:#ff9000}.c-e55225{background:#e55225}
```
